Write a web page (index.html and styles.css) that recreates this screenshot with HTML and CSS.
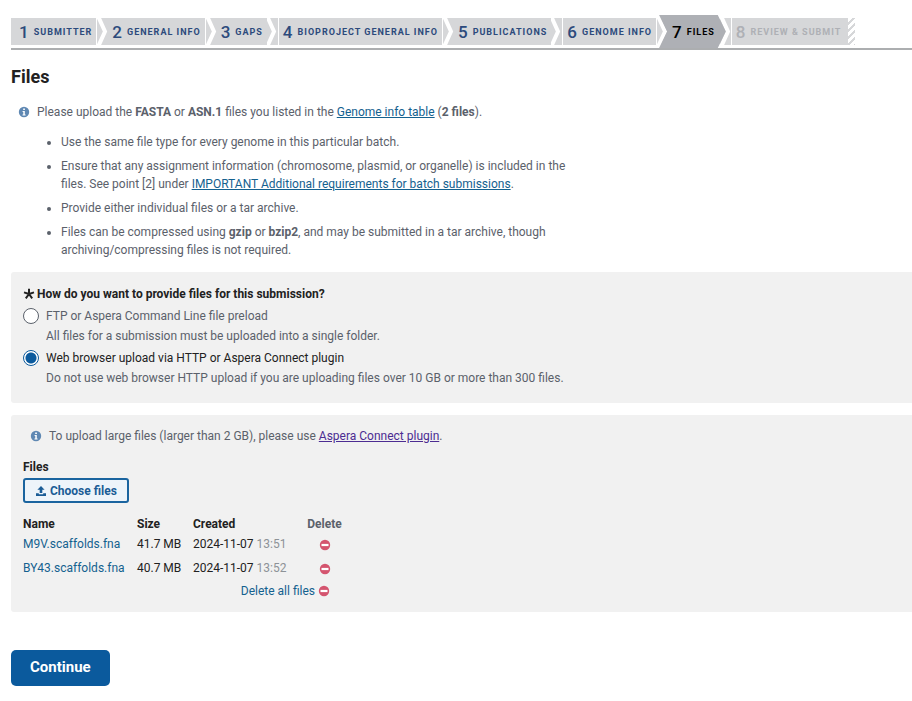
FILE: index.html
```html
<!DOCTYPE html>
<html lang="en">
<head>
<meta charset="utf-8">
<title>Files</title>
<link rel="stylesheet" href="styles.css">
</head>
<body>
<svg class="sprite" aria-hidden="true">
  <symbol id="info" viewBox="0 0 12 12"><circle cx="6" cy="6" r="5.2" fill="#5f88b3"/><path d="M4.6 4.9h2.2v3.5h.8v1H4.5v-1h.8V5.9h-.7zM5.2 2.5h1.7V4H5.2z" fill="#fff"/></symbol>
  <symbol id="minus" viewBox="0 0 12 12"><circle cx="6" cy="6" r="5.2" fill="#d4556f"/><rect x="2.500" y="4.900" width="7" height="2.200" fill="#fff"/></symbol>
  <symbol id="upload" viewBox="0 0 12 12"><path d="M6 1l3.600 3.800H7.300v3.100H4.700V4.800H2.400zM1 8.200h2.800v1h4.400v-1H11V11H1z" fill="#1a5c96"/></symbol>
</svg>
<nav aria-label="Submission steps">
  <ol class="steps">
    <li><a class="step" href="#"><b>1</b>Submitter</a><svg class="arrow gap-before" viewBox="0 0 11 27"><path d="M1-2l7 15.500L1 29"/></svg></li>
    <li><a class="step" href="#"><b>2</b>General info</a><svg class="arrow gap-before" viewBox="0 0 11 27"><path d="M1-2l7 15.500L1 29"/></svg></li>
    <li><a class="step" href="#"><b>3</b>Gaps</a><svg class="arrow gap-after" viewBox="0 0 11 27"><path d="M0-2l7 15.500L0 29"/></svg></li>
    <li><a class="step" href="#"><b>4</b>BioProject general info</a><svg class="arrow gap-before" viewBox="0 0 11 27"><path d="M1-2l7 15.500L1 29"/></svg></li>
    <li><a class="step" href="#"><b>5</b>Publications</a><svg class="arrow gap-after" viewBox="0 0 11 27"><path d="M0-2l7 15.500L0 29"/></svg></li>
    <li><a class="step" href="#"><b>6</b>Genome info</a><svg class="arrow gap-before" viewBox="0 0 11 27"><path d="M1-2l7 15.500L1 29"/></svg></li>
    <li class="current"><a class="step" href="#" aria-current="step"><b>7</b>Files</a></li>
    <li class="disabled"><svg class="arrow gap-after" viewBox="0 0 11 27"><path d="M1-2l7 15.500L1 29"/></svg><span class="step"><b>8</b>Review &amp; submit</span></li>
  </ol>
</nav>
<main>
  <h1>Files</h1>
  <p class="note"><svg class="icon"><use href="#info"/></svg><span>Please upload the <b>FASTA</b> or <b>ASN.1</b> files you listed in the <a href="#">Genome info table</a> (<b>2 files</b>).</span></p>
  <ul class="rules">
    <li>Use the same file type for every genome in this particular batch.</li>
    <li>Ensure that any assignment information (chromosome, plasmid, or organelle) is included in the files. See point [2] under <a href="#">IMPORTANT Additional requirements for batch submissions</a>.</li>
    <li>Provide either individual files or a tar archive.</li>
    <li>Files can be compressed using <b>gzip</b> or <b>bzip2</b>, and may be submitted in a tar archive, though archiving/compressing files is not required.</li>
  </ul>
  <form>
    <fieldset class="panel choices">
      <legend><svg class="star" viewBox="0 0 12 12"><path d="M6 6V.800M6 6l5-1.600M6 6l3.200 4.300M6 6l-3.200 4.300M6 6L1 4.400"/></svg>How do you want to provide files for this submission?</legend>
      <div class="option">
        <input type="radio" name="method" id="ftp"><label for="ftp">FTP or Aspera Command Line file preload</label>
        <p>All files for a submission must be uploaded into a single folder.</p>
      </div>
      <div class="option">
        <input type="radio" name="method" id="web" checked><label for="web">Web browser upload via HTTP or Aspera Connect plugin</label>
        <p>Do not use web browser HTTP upload if you are uploading files over 10 GB or more than 300 files.</p>
      </div>
    </fieldset>
    <section class="panel upload">
      <p class="note"><svg class="icon"><use href="#info"/></svg><span>To upload large files (larger than 2 GB), please use <a class="visited" href="#">Aspera Connect plugin</a>.</span></p>
      <h2>Files</h2>
      <button type="button" class="choose"><svg class="icon"><use href="#upload"/></svg>Choose files</button>
      <table>
        <thead><tr><th class="name">Name</th><th class="size">Size</th><th class="created">Created</th><th class="delete">Delete</th></tr></thead>
        <tbody>
          <tr><td><a href="#">M9V.scaffolds.fna</a></td><td>41.7 MB</td><td>2024-11-07 <time>13:51</time></td><td class="delete"><button type="button" class="remove" aria-label="Delete M9V.scaffolds.fna"><svg class="icon"><use href="#minus"/></svg></button></td></tr>
          <tr><td><a href="#">BY43.scaffolds.fna</a></td><td>40.7 MB</td><td>2024-11-07 <time>13:52</time></td><td class="delete"><button type="button" class="remove" aria-label="Delete BY43.scaffolds.fna"><svg class="icon"><use href="#minus"/></svg></button></td></tr>
        </tbody>
        <tfoot><tr><td colspan="4"><button type="button" class="remove">Delete all files<svg class="icon"><use href="#minus"/></svg></button></td></tr></tfoot>
      </table>
    </section>
    <button type="submit" class="continue">Continue</button>
  </form>
</main>
</body>
</html>
```
FILE: styles.css
```css
* { box-sizing: border-box; }
body { margin: 0; padding: 15px 0 15px 11px; background: #fff; color: #5b616b; font: 12px/18px Roboto, sans-serif; }
h1, h2, p, ul, ol { margin: 0; padding: 0; }
b { font-weight: 700; }
a { color: #14618f; }
button { font: inherit; cursor: pointer; }
.sprite { display: none; }
.icon { width: 12px; height: 12px; flex: none; }

.steps { display: flex; align-items: center; height: 35px; border-bottom: 2px solid #acaeb0; list-style: none; }
.steps li { display: flex; height: 27px; }
.step { display: flex; align-items: center; padding: 0 4px; background: #d6d7d9; color: #2c4a7c; font-size: 9px; font-weight: 700; letter-spacing: 1px; text-transform: uppercase; text-decoration: none; white-space: nowrap; }
.step b { margin-right: 5px; font-size: 17px; font-weight: 500; letter-spacing: 0; }
.steps li:first-child .step { padding-left: 8px; }
.arrow { width: 11px; height: 27px; background: #d6d7d9; }
.arrow path { fill: none; stroke: #fff; stroke-width: 4; }
.gap-before { margin-left: 1px; }
.gap-after { margin-right: 1px; }
.steps .current { height: 33px; margin: 0 -6px 0 -9px; z-index: 1; }
.current .step { padding: 0 11px 0 13px; background: #aeb0b5; color: #000; clip-path: polygon(0 0, calc(100% - 8px) 0, 100% 50%, calc(100% - 8px) 100%, 0 100%, 8px 50%); }
.disabled .step { color: #aeb0b5; padding-right: 7px; }
.disabled::after { content: ""; width: 7px; background: repeating-linear-gradient(135deg, #fff 0 3px, #d6d7d9 3px 5px); }

h1 { margin: 15px 0 14px; color: #212121; font-size: 18px; line-height: 24px; font-weight: 700; }
.note { display: flex; align-items: center; gap: 7px; padding-left: 7px; }
.rules { max-width: 572px; margin-top: 12px; padding-left: 50px; }
.rules li { margin-bottom: 6px; }

.panel { margin: 0 0 12px; border: 0; border-radius: 3px 0 0 3px; background: #f1f1f1; padding: 12px; }
form { margin-top: 13px; }
.choices { padding-bottom: 15px; }
legend { float: left; width: 100%; display: flex; align-items: center; gap: 2px; padding: 0; color: #212121; line-height: 20px; font-weight: 700; }
.star { width: 12px; height: 12px; }
.star path { fill: none; stroke: #212121; stroke-width: 2; }
.option { clear: both; display: grid; grid-template-columns: 16px 1fr; column-gap: 7px; align-items: center; padding-top: 2px; line-height: 20px; }
.option p { grid-column: 2; }
.option input { appearance: none; width: 16px; height: 16px; margin: 0; border: 1px solid #5b616b; border-radius: 50%; background: #fff; }
.option input:checked { border-color: #0b5a9d; background: radial-gradient(circle, #0b5a9d 5px, #fff 6px); }
.option input:checked + label { color: #212121; }

.upload { padding-bottom: 10px; }
.visited { color: #4c2c92; }
h2 { margin: 13px 0 2px; color: #212121; font-size: 12px; line-height: 18px; font-weight: 700; }
.choose { display: flex; align-items: center; gap: 3px; height: 25px; padding: 0 10px; border: 2px solid #1a649f; border-radius: 3px; background: #edf4fa; color: #1a5c96; font-weight: 700; }
table { margin-top: 13px; border-collapse: collapse; color: #212121; }
th, td { height: 24px; padding: 0; text-align: left; }
th { height: 16px; line-height: 16px; font-weight: 700; }
.name { width: 114px; }
.size { width: 56px; }
.created { width: 114px; }
table a { text-decoration: none; }
time { color: #8d9297; }
.delete { width: 35px; text-align: center; color: #5b616b; }
.remove { display: inline-flex; align-items: center; gap: 3px; padding: 0; border: 0; background: none; color: #14618f; vertical-align: middle; }
tfoot td { height: 22px; padding-right: 12px; text-align: right; }
.continue { display: block; height: 36px; margin-top: 38px; padding: 0 19px 2px; border: 0; border-radius: 5px; background: #0b5a9d; color: #fff; font-size: 15px; line-height: 18px; font-weight: 700; }
```
